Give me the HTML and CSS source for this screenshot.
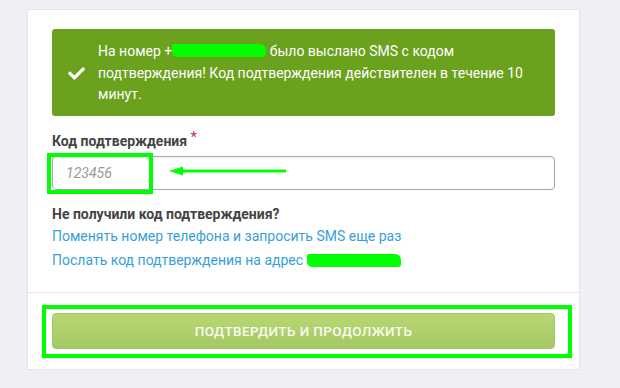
FILE: index.html
```html
<!doctype html>
<html>
	<head>
		<meta http-equiv="Content-Type" content="text/html; charset=utf-8">
		<title>Подтверждение телефона</title>
		<link rel="stylesheet" href="styles.css">
	</head>
<body>

	<!--card start-->
	<div class="card">
		<div class="card_body">
			<div class="alert">
				<svg class="alert_icon" viewBox="0 0 512 512" width="17" height="17">
					<path d="M173.9 439.4L7.5 273c-10-10-10-26.2 0-36.2l36.2-36.2c10-10 26.2-10 36.2 0L192 312.7 432.1 72.6c10-10 26.2-10 36.2 0l36.2 36.2c10 10 10 26.2 0 36.2L210.1 439.4c-10 10-26.2 10-36.2 0z" fill="#fff"/>
				</svg>
				<p class="alert_text">На номер +<span class="blot"></span> было выслано SMS с кодом подтверждения! Код подтверждения действителен в течение 10 минут.</p>
			</div>

			<div class="field">
				<label class="f_label" for="code">Код подтверждения <i class="req">*</i></label>
				<div class="f_wrap">
					<input type="text" class="f_input" id="code" placeholder="123456">
					<span class="mark mark_input"></span>
					<svg class="arrow" viewBox="0 0 118 10" width="118" height="10">
						<path d="M12 5 H117" stroke="#00ff00" stroke-width="3"/>
						<path d="M0 5 L14 0.5 L14 9.5 Z" fill="#00ff00"/>
					</svg>
				</div>
			</div>

			<div class="resend">
				<h3>Не получили код подтверждения?</h3>
				<a href="#">Поменять номер телефона и запросить SMS еще раз</a>
				<a href="#">Послать код подтверждения на адрес <span class="blot blot_mail"></span></a>
			</div>
		</div>

		<div class="card_foot">
			<div class="btn_wrap">
				<button type="button" class="btn">Подтвердить и продолжить</button>
				<span class="mark mark_btn"></span>
			</div>
		</div>
	</div>
	<!--end card-->

</body>
</html>
```

FILE: styles.css
```css
*{margin:0;padding:0;box-sizing:border-box;}
body{background:#eef0f3;font-family:Roboto,"Liberation Sans",Arial,sans-serif;font-size:14px;color:#444;padding-top:9px;}

/*card start*/
.card{width:553px;margin-left:27px;background:#fff;border:1px solid #e3e5e8;box-shadow:0 1px 1px rgba(0,0,0,.04);}
.card_body{padding:19px 24px 20px;}

.alert{display:flex;align-items:center;background:#6aa11d;color:#fff;border-radius:3px;padding:12px 20px 10px 16px;min-height:87px;}
.alert_icon{flex:none;margin-right:13px;margin-top:-1px;}
.alert_text{line-height:21.5px;font-size:14px;}

.blot{display:inline-block;width:94px;height:13px;background:#00ff00;vertical-align:-1px;border-radius:2px 6px 3px 5px;}
.blot_mail{vertical-align:-2px;}

.field{margin-top:15px;}
.f_label{display:block;font-weight:bold;line-height:20px;height:20px;color:#444;}
.f_label .req{position:relative;top:-4px;font-style:normal;font-weight:normal;color:#d6245a;font-size:15px;line-height:0;}
.f_wrap{position:relative;margin-top:5px;}
.f_input{display:block;width:100%;height:34px;border:1px solid #a3aab4;border-radius:4px;padding:0 13px;font-family:Roboto,"Liberation Sans",Arial,sans-serif;font-size:14px;color:#444;outline:none;box-shadow:inset 0 1px 2px rgba(0,0,0,.08);}
.f_input::placeholder{color:#999;font-style:italic;}

.mark{position:absolute;border:4px solid #00ff00;pointer-events:none;}
.mark_input{left:-5px;top:-3px;width:106px;height:41px;}
.arrow{position:absolute;left:117px;top:10px;}

.resend{margin-top:14px;}
.resend h3{font-size:14px;font-weight:bold;line-height:20px;color:#444;}
.resend a{display:block;line-height:24px;color:#389fd6;text-decoration:none;}

.card_foot{border-top:1px solid #e5e7ea;padding:20px 24px 20px;}
.btn_wrap{position:relative;}
.btn{display:block;width:100%;height:36px;border:1px solid #a3c565;border-radius:4px;background:linear-gradient(#b9d872,#a4c866);color:#f9fbf3;font-family:Roboto,"Liberation Sans",Arial,sans-serif;font-size:13.5px;font-weight:500;text-transform:uppercase;letter-spacing:.4px;cursor:pointer;}
.mark_btn{left:-10px;top:-8px;width:530px;height:53px;}
/*end card*/
```
